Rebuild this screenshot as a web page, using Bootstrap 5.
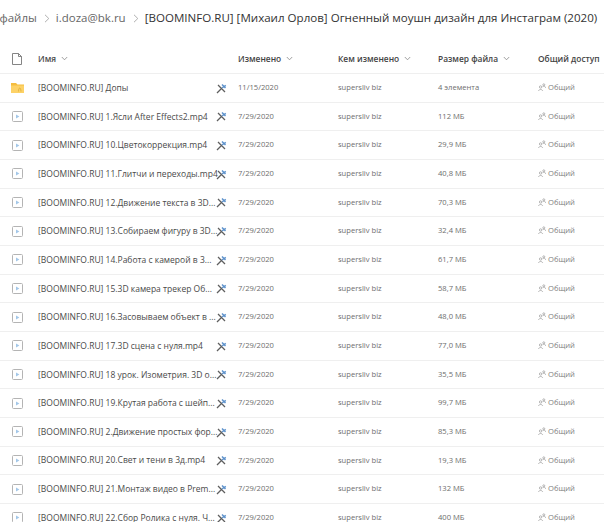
<!DOCTYPE html>
<html lang="ru">
  <head>
    <meta charset="UTF-8" />
    <meta name="viewport" content="width=device-width, initial-scale=1.0" />
    <title>Файлы</title>
    <link href="https://cdn.jsdelivr.net/npm/bootstrap@5.3.0/dist/css/bootstrap.min.css" rel="stylesheet" />
    <style>
      body {
        font-family: "Open Sans", "Noto Sans", sans-serif;
        background: #fff;
        overflow: hidden;
        height: 522px;
      }
      .crumbs {
        height: 36px;
        padding-top: 8px;
        font-size: 11.5px;
        color: #666;
        white-space: nowrap;
        line-height: 20px;
      }
      .crumbs .sep { width: 6px; height: 9px; margin: 0 5.5px 0 7.5px; }
      .crumbs .here { color: #333; font-size: 11.57px; }
      .crumbs .first { margin-left: -.5px; }
      .head-row, .file-row {
        display: flex;
        align-items: center;
        border-bottom: 1px solid #efefef;
      }
      .head-row {
        height: 38px;
        padding-top: 9px;
        font-size: 8.4px;
        font-weight: 600;
        color: #444;
      }
      .file-row {
        height: 28.67px;
        font-size: 8.5px;
        color: #555;
      }
      .c-icon { width: 38px; flex: none; display: flex; justify-content: center; padding-right: 4px; }
      .c-name { width: 178px; flex: none; white-space: nowrap; color: #4a4a4a; }
      .file-row .c-name { padding-top: 1px; }
      .c-pin { width: 22px; flex: none; display: flex; padding-top: 1px; }
      .c-date, .c-by, .c-size { width: 100px; flex: none; font-size: 7.6px; color: #6e6e6e; }
      .c-share { flex: none; white-space: nowrap; font-size: 7.6px; color: #808080; }
      .head-row .c-date, .head-row .c-by, .head-row .c-size, .head-row .c-share { font-size: 8.4px; color: #444; }
      .sort-caret { width: 7px; height: 5px; margin-left: 3px; vertical-align: 1px; }
      .who { width: 8px; height: 8px; margin-right: 2px; vertical-align: -1px; }
    </style>
  </head>
  <body>
    <svg width="0" height="0" class="d-block">
      <symbol id="i-video" viewBox="0 0 11 11">
        <rect x="0.5" y="0.5" width="10" height="10" rx="1" fill="#fff" stroke="#b4b4b4" />
        <path d="M4 3.400 7.400 5.500 4 7.600Z" fill="#a3c7e8" />
      </symbol>
      <symbol id="i-pin" viewBox="0 0 11 11">
        <path d="M1 10 6 5M2 2l7 7" fill="none" stroke="#5f5f5f" stroke-width="1.300" />
        <path d="M6 1.500l3.500 3.500M6 5 9.800 2.400" fill="none" stroke="#5f93cc" stroke-width="1.500" />
      </symbol>
      <symbol id="i-who" viewBox="0 0 8 8">
        <circle cx="2.600" cy="4" r="1.200" fill="none" stroke="#999" stroke-width=".7" />
        <path d="M.6 8c0-2 4-2 4 0" fill="none" stroke="#999" stroke-width=".7" />
        <circle cx="5.800" cy="1.800" r="1" fill="none" stroke="#999" stroke-width=".7" />
        <path d="M4.600 3.600c1-.6 3-.4 3 1.200" fill="none" stroke="#999" stroke-width=".7" />
      </symbol>
      <symbol id="i-caret" viewBox="0 0 7 5">
        <path d="M.8 1 3.500 3.800 6.200 1" fill="none" stroke="#888" stroke-width=".8" />
      </symbol>
      <symbol id="i-chev" viewBox="0 0 6 9">
        <path d="M1 .8 4.800 4.500 1 8.200" fill="none" stroke="#a6a6a6" stroke-width=".9" />
      </symbol>
    </svg>

    <div class="crumbs">
      <span class="first">файлы</span><svg class="sep"><use href="#i-chev" /></svg>i.doza@bk.ru<svg class="sep"><use href="#i-chev" /></svg><span class="here">[BOOMINFO.RU] [Михаил Орлов] Огненный моушн дизайн для Инстаграм (2020)</span>
    </div>

    <div class="head-row">
      <div class="c-icon">
        <svg width="10" height="12" viewBox="0 0 10 12">
          <path d="M.5.5h6l3 3v8h-9zM6.500.5v3h3" fill="#fff" stroke="#777" stroke-width=".9" />
        </svg>
      </div>
      <div class="c-name">Имя <svg class="sort-caret"><use href="#i-caret" /></svg></div>
      <div class="c-pin"></div>
      <div class="c-date">Изменено <svg class="sort-caret"><use href="#i-caret" /></svg></div>
      <div class="c-by">Кем изменено <svg class="sort-caret"><use href="#i-caret" /></svg></div>
      <div class="c-size">Размер файла <svg class="sort-caret"><use href="#i-caret" /></svg></div>
      <div class="c-share">Общий доступ</div>
    </div>

    <div class="file-row">
      <div class="c-icon">
        <svg width="13" height="10" viewBox="0 0 13 10">
          <path d="M0 0h5l1.500 1.500H13V10H0z" fill="#f5bd3f" />
          <path d="M0 2.500h13V10H0z" fill="#fdd267" />
          <path d="M7.500 8.500c0-2 .5-3.500 1.200-3.500s1.300 1.500 1.300 3.500" fill="none" stroke="#d9a830" stroke-width=".7" />
        </svg>
      </div>
      <div class="c-name">[BOOMINFO.RU] Допы</div>
      <div class="c-pin"><svg width="11" height="11"><use href="#i-pin" /></svg></div>
      <div class="c-date">11/15/2020</div>
      <div class="c-by">supersliv biz</div>
      <div class="c-size">4 элемента</div>
      <div class="c-share"><svg class="who"><use href="#i-who" /></svg>Общий</div>
    </div>
    <div class="file-row"><div class="c-icon"><svg width="11" height="11"><use href="#i-video" /></svg></div><div class="c-name">[BOOMINFO.RU] 1.Ясли After Effects2.mp4</div><div class="c-pin"><svg width="11" height="11"><use href="#i-pin" /></svg></div><div class="c-date">7/29/2020</div><div class="c-by">supersliv biz</div><div class="c-size">112 МБ</div><div class="c-share"><svg class="who"><use href="#i-who" /></svg>Общий</div></div>
    <div class="file-row"><div class="c-icon"><svg width="11" height="11"><use href="#i-video" /></svg></div><div class="c-name">[BOOMINFO.RU] 10.Цветокоррекция.mp4</div><div class="c-pin"><svg width="11" height="11"><use href="#i-pin" /></svg></div><div class="c-date">7/29/2020</div><div class="c-by">supersliv biz</div><div class="c-size">29,9 МБ</div><div class="c-share"><svg class="who"><use href="#i-who" /></svg>Общий</div></div>
    <div class="file-row"><div class="c-icon"><svg width="11" height="11"><use href="#i-video" /></svg></div><div class="c-name">[BOOMINFO.RU] 11.Глитчи и переходы.mp4</div><div class="c-pin"><svg width="11" height="11"><use href="#i-pin" /></svg></div><div class="c-date">7/29/2020</div><div class="c-by">supersliv biz</div><div class="c-size">40,8 МБ</div><div class="c-share"><svg class="who"><use href="#i-who" /></svg>Общий</div></div>
    <div class="file-row"><div class="c-icon"><svg width="11" height="11"><use href="#i-video" /></svg></div><div class="c-name">[BOOMINFO.RU] 12.Движение текста в 3D...</div><div class="c-pin"><svg width="11" height="11"><use href="#i-pin" /></svg></div><div class="c-date">7/29/2020</div><div class="c-by">supersliv biz</div><div class="c-size">70,3 МБ</div><div class="c-share"><svg class="who"><use href="#i-who" /></svg>Общий</div></div>
    <div class="file-row"><div class="c-icon"><svg width="11" height="11"><use href="#i-video" /></svg></div><div class="c-name">[BOOMINFO.RU] 13.Собираем фигуру в 3D...</div><div class="c-pin"><svg width="11" height="11"><use href="#i-pin" /></svg></div><div class="c-date">7/29/2020</div><div class="c-by">supersliv biz</div><div class="c-size">32,4 МБ</div><div class="c-share"><svg class="who"><use href="#i-who" /></svg>Общий</div></div>
    <div class="file-row"><div class="c-icon"><svg width="11" height="11"><use href="#i-video" /></svg></div><div class="c-name">[BOOMINFO.RU] 14.Работа с камерой в 3...</div><div class="c-pin"><svg width="11" height="11"><use href="#i-pin" /></svg></div><div class="c-date">7/29/2020</div><div class="c-by">supersliv biz</div><div class="c-size">61,7 МБ</div><div class="c-share"><svg class="who"><use href="#i-who" /></svg>Общий</div></div>
    <div class="file-row"><div class="c-icon"><svg width="11" height="11"><use href="#i-video" /></svg></div><div class="c-name">[BOOMINFO.RU] 15.3D камера трекер Об...</div><div class="c-pin"><svg width="11" height="11"><use href="#i-pin" /></svg></div><div class="c-date">7/29/2020</div><div class="c-by">supersliv biz</div><div class="c-size">58,7 МБ</div><div class="c-share"><svg class="who"><use href="#i-who" /></svg>Общий</div></div>
    <div class="file-row"><div class="c-icon"><svg width="11" height="11"><use href="#i-video" /></svg></div><div class="c-name">[BOOMINFO.RU] 16.Засовываем объект в ...</div><div class="c-pin"><svg width="11" height="11"><use href="#i-pin" /></svg></div><div class="c-date">7/29/2020</div><div class="c-by">supersliv biz</div><div class="c-size">48,0 МБ</div><div class="c-share"><svg class="who"><use href="#i-who" /></svg>Общий</div></div>
    <div class="file-row"><div class="c-icon"><svg width="11" height="11"><use href="#i-video" /></svg></div><div class="c-name">[BOOMINFO.RU] 17.3D сцена с нуля.mp4</div><div class="c-pin"><svg width="11" height="11"><use href="#i-pin" /></svg></div><div class="c-date">7/29/2020</div><div class="c-by">supersliv biz</div><div class="c-size">77,0 МБ</div><div class="c-share"><svg class="who"><use href="#i-who" /></svg>Общий</div></div>
    <div class="file-row"><div class="c-icon"><svg width="11" height="11"><use href="#i-video" /></svg></div><div class="c-name">[BOOMINFO.RU] 18 урок. Изометрия. 3D о...</div><div class="c-pin"><svg width="11" height="11"><use href="#i-pin" /></svg></div><div class="c-date">7/29/2020</div><div class="c-by">supersliv biz</div><div class="c-size">35,5 МБ</div><div class="c-share"><svg class="who"><use href="#i-who" /></svg>Общий</div></div>
    <div class="file-row"><div class="c-icon"><svg width="11" height="11"><use href="#i-video" /></svg></div><div class="c-name">[BOOMINFO.RU] 19.Крутая работа с шейп...</div><div class="c-pin"><svg width="11" height="11"><use href="#i-pin" /></svg></div><div class="c-date">7/29/2020</div><div class="c-by">supersliv biz</div><div class="c-size">99,7 МБ</div><div class="c-share"><svg class="who"><use href="#i-who" /></svg>Общий</div></div>
    <div class="file-row"><div class="c-icon"><svg width="11" height="11"><use href="#i-video" /></svg></div><div class="c-name">[BOOMINFO.RU] 2.Движение простых фор...</div><div class="c-pin"><svg width="11" height="11"><use href="#i-pin" /></svg></div><div class="c-date">7/29/2020</div><div class="c-by">supersliv biz</div><div class="c-size">85,3 МБ</div><div class="c-share"><svg class="who"><use href="#i-who" /></svg>Общий</div></div>
    <div class="file-row"><div class="c-icon"><svg width="11" height="11"><use href="#i-video" /></svg></div><div class="c-name">[BOOMINFO.RU] 20.Свет и тени в 3д.mp4</div><div class="c-pin"><svg width="11" height="11"><use href="#i-pin" /></svg></div><div class="c-date">7/29/2020</div><div class="c-by">supersliv biz</div><div class="c-size">19,3 МБ</div><div class="c-share"><svg class="who"><use href="#i-who" /></svg>Общий</div></div>
    <div class="file-row"><div class="c-icon"><svg width="11" height="11"><use href="#i-video" /></svg></div><div class="c-name">[BOOMINFO.RU] 21.Монтаж видео в Prem...</div><div class="c-pin"><svg width="11" height="11"><use href="#i-pin" /></svg></div><div class="c-date">7/29/2020</div><div class="c-by">supersliv biz</div><div class="c-size">132 МБ</div><div class="c-share"><svg class="who"><use href="#i-who" /></svg>Общий</div></div>
    <div class="file-row"><div class="c-icon"><svg width="11" height="11"><use href="#i-video" /></svg></div><div class="c-name">[BOOMINFO.RU] 22.Сбор Ролика с нуля. Ч...</div><div class="c-pin"><svg width="11" height="11"><use href="#i-pin" /></svg></div><div class="c-date">7/29/2020</div><div class="c-by">supersliv biz</div><div class="c-size">400 МБ</div><div class="c-share"><svg class="who"><use href="#i-who" /></svg>Общий</div></div>

    <script src="https://cdn.jsdelivr.net/npm/bootstrap@5.3.0/dist/js/bootstrap.bundle.min.js"></script>
  </body>
</html>
